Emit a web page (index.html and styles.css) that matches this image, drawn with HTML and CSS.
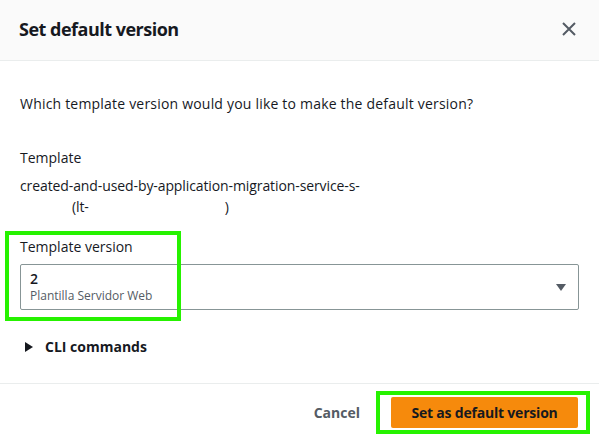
FILE: index.html
```html
<!DOCTYPE html>
<html lang="en">
<head>
<meta charset="utf-8">
<title>Set default version</title>
<link rel="stylesheet" href="styles.css">
</head>
<body>
<div class="modal">
  <header class="modal-header">
    <h2 class="modal-title">Set default version</h2>
    <button class="close-btn" aria-label="Close">
      <svg width="16" height="16" viewBox="0 0 16 16"><path d="M2 2 L14 14 M14 2 L2 14" stroke="#545b64" stroke-width="2" fill="none"/></svg>
    </button>
  </header>
  <main class="modal-body">
    <p class="question">Which template version would you like to make the default version?</p>
    <div class="kv">
      <div class="kv-label">Template</div>
      <div class="kv-value">created-and-used-by-application-migration-service-s-<br><span class="redacted-a"></span>(lt-<span class="redacted-b"></span>)</div>
    </div>
    <div class="field">
      <label class="field-label">Template version</label>
      <div class="select">
        <div class="select-text">
          <div class="select-value">2</div>
          <div class="select-desc">Plantilla Servidor Web</div>
        </div>
        <svg class="caret" width="12" height="10" viewBox="0 0 12 10"><path d="M1 2 L11 2 L6 9 Z" fill="#545b64"/></svg>
      </div>
      <span class="highlight highlight-field"></span>
    </div>
    <div class="expander">
      <svg width="10" height="12" viewBox="0 0 10 12"><path d="M1 1 L9 6 L1 11 Z" fill="#16191f"/></svg>
      <span>CLI commands</span>
    </div>
  </main>
  <footer class="modal-footer">
    <button class="btn-link">Cancel</button>
    <div class="primary-wrap">
      <button class="btn-primary">Set as default version</button>
      <span class="highlight highlight-btn"></span>
    </div>
  </footer>
</div>
</body>
</html>
```
FILE: styles.css
```css
* { box-sizing: border-box; }
body {
  margin: 0;
  background: #ffffff;
  font-family: "Open Sans", "Noto Sans", sans-serif;
  color: #16191f;
  font-size: 14px;
}
.modal { width: 599px; height: 440px; display: flex; flex-direction: column; }
.modal-header {
  height: 61px;
  background: #fafafa;
  border-bottom: 1px solid #eaeded;
  display: flex;
  align-items: center;
  justify-content: space-between;
  padding: 0 20px 2px 19px;
}
.modal-title { margin: 0; font-size: 18px; font-weight: 700; letter-spacing: -0.5px; }
.close-btn { border: 0; background: none; padding: 0; display: flex; width: 16px; height: 16px; margin-right: 2px; }
.modal-body { padding: 33px 20px 0 20px; flex: 1; }
.question { margin: 0; line-height: 20px; letter-spacing: 0.2px; }
.kv { margin-top: 34px; }
.kv-label { line-height: 20px; }
.kv-value { line-height: 21px; margin-top: 7px; letter-spacing: -0.1px; }
.redacted-a { display: inline-block; width: 52px; }
.redacted-b { display: inline-block; width: 136px; }
.field { position: relative; margin-top: 20px; }
.field-label { display: block; line-height: 20px; margin-bottom: 7px; }
.select {
  height: 46px;
  border: 1px solid #879596;
  border-radius: 2px;
  display: flex;
  align-items: center;
  justify-content: space-between;
  padding: 0 10px 0 9px;
}
.select-value { font-size: 14px; font-weight: 600; line-height: 18px; }
.select-desc { font-size: 12px; color: #545b64; line-height: 16px; }
.caret { margin-right: 1px; }
.highlight { position: absolute; border: 4px solid #26f200; pointer-events: none; }
.highlight-field { left: -15px; top: -6px; width: 176px; height: 90px; }
.expander { margin-top: 27px; display: flex; align-items: center; gap: 11px; padding-left: 4px; font-weight: 700; line-height: 20px; }
.modal-footer {
  height: 57px;
  border-top: 1px solid #eaeded;
  display: flex;
  align-items: center;
  justify-content: flex-end;
  padding: 0 21px 0 0;
  gap: 31px;
}
.btn-link { border: 0; background: none; font: inherit; font-weight: 700; color: #545b64; padding: 0; }
.primary-wrap { position: relative; }
.btn-primary {
  border: 0;
  background: #f68a0c;
  color: #16191f;
  font: inherit;
  font-weight: 700;
  letter-spacing: -0.2px;
  border-radius: 2px;
  height: 31px;
  width: 187px;
  padding: 0;
}
.highlight-btn { left: -15px; top: -6px; width: 214px; height: 43px; }
```
